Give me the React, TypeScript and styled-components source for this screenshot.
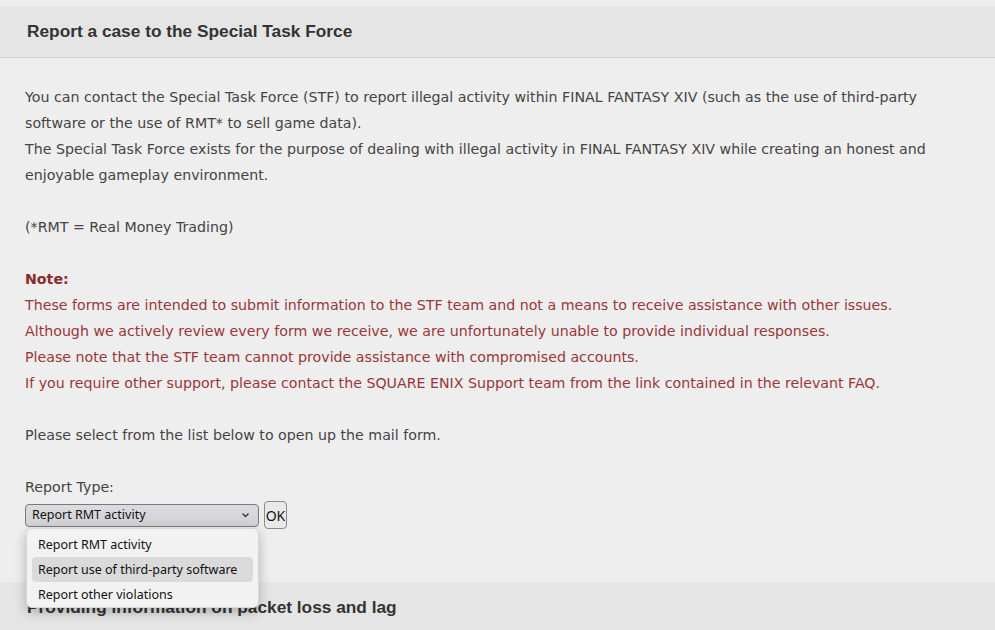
import React from "react";
import styled, { createGlobalStyle } from "styled-components";

const Global = createGlobalStyle`
  html, body {
    margin: 0;
    padding: 0;
    background: #eeeeee;
  }
  body {
    font-family: "DejaVu Sans", Verdana, sans-serif;
    color: #444444;
  }
`;

const Page = styled.div`
  padding-top: 6px;
`;

const SectionHeader = styled.h2`
  margin: 0;
  height: 52px;
  box-sizing: border-box;
  display: flex;
  align-items: center;
  padding: 0 27px;
  background: #e5e5e5;
  border-bottom: 1px solid #d2d2d2;
  font-family: "Liberation Sans", Arial, sans-serif;
  font-weight: 700;
  font-size: 17.3px;
  color: #333333;
`;

const SectionBody = styled.div`
  padding: 26px 25px 53px;
  font-size: 14.2px;
  line-height: 26px;
`;

const Para = styled.p<{ $tone?: "note" }>`
  margin: 0 0 26px;
  color: ${(p) => (p.$tone === "note" ? "#9a3638" : "#444444")};
`;

const NoteTitle = styled.strong`
  color: #8c2a2c;
  font-weight: 700;
`;

const Label = styled.div`
  line-height: 26px;
`;

const FormRow = styled.div`
  position: relative;
  display: flex;
  align-items: center;
  gap: 5px;
  height: 28px;
  margin-top: 1px;
`;

const SelectBox = styled.div`
  box-sizing: border-box;
  width: 234px;
  height: 23px;
  display: flex;
  align-items: center;
  justify-content: space-between;
  padding: 0 8px 0 6px;
  border: 1px solid #7a7a7e;
  border-radius: 4px;
  background: linear-gradient(#dcdce0, #d2d2d6);
  font-family: "Noto Sans", "Open Sans", sans-serif;
  font-size: 12.5px;
  color: #111111;
`;

const OkButton = styled.button`
  box-sizing: border-box;
  width: 23px;
  height: 28px;
  padding: 0;
  border: 1px solid #8a8a8a;
  border-radius: 4px;
  background: #e9e9e9;
  font-family: "Noto Sans", "Open Sans", sans-serif;
  font-size: 14px;
  color: #111111;
`;

const ListBox = styled.ul`
  position: absolute;
  left: 1px;
  top: 27px;
  width: 233px;
  box-sizing: border-box;
  margin: 0;
  padding: 3px 5px 0;
  list-style: none;
  background: #f2f2f2;
  border: 1px solid #d8d8d8;
  border-radius: 6px;
  box-shadow: 0 4px 12px rgba(0, 0, 0, 0.25);
  font-family: "Noto Sans", "Open Sans", sans-serif;
  font-size: 12.5px;
  color: #111111;
  z-index: 2;
`;

const Option = styled.li<{ $active?: boolean }>`
  height: 25px;
  display: flex;
  align-items: center;
  padding: 0 6px;
  border-radius: 4px;
  background: ${(p) => (p.$active ? "#dadada" : "transparent")};
`;

const Chevron = () => (
  <svg width="9" height="6" viewBox="0 0 9 6" fill="none">
    <path d="M1.5 1.5 L4.5 4.5 L7.5 1.5" stroke="#333" strokeWidth="1.3" />
  </svg>
);

const options = [
  "Report RMT activity",
  "Report use of third-party software",
  "Report other violations",
];

export default function App() {
  return (
    <Page>
      <Global />
      <SectionHeader>Report a case to the Special Task Force</SectionHeader>
      <SectionBody>
        <Para>
          You can contact the Special Task Force (STF) to report illegal activity within FINAL FANTASY XIV (such as the use of third-party software or the use of RMT* to sell game data).
          <br />
          The Special Task Force exists for the purpose of dealing with illegal activity in FINAL FANTASY XIV while creating an honest and enjoyable gameplay environment.
        </Para>
        <Para>(*RMT = Real Money Trading)</Para>
        <Para $tone="note">
          <NoteTitle>Note:</NoteTitle>
          <br />
          These forms are intended to submit information to the STF team and not a means to receive assistance with other issues.
          <br />
          Although we actively review every form we receive, we are unfortunately unable to provide individual responses.
          <br />
          Please note that the STF team cannot provide assistance with compromised accounts.
          <br />
          If you require other support, please contact the SQUARE ENIX Support team from the link contained in the relevant FAQ.
        </Para>
        <Para>Please select from the list below to open up the mail form.</Para>
        <Label>Report Type:</Label>
        <FormRow>
          <SelectBox>
            <span>{options[0]}</span>
            <Chevron />
          </SelectBox>
          <OkButton>OK</OkButton>
          <ListBox role="listbox">
            {options.map((o, i) => (
              <Option key={o} $active={i === 1}>
                {o}
              </Option>
            ))}
          </ListBox>
        </FormRow>
      </SectionBody>
      <SectionHeader>Providing information on packet loss and lag</SectionHeader>
    </Page>
  );
}
